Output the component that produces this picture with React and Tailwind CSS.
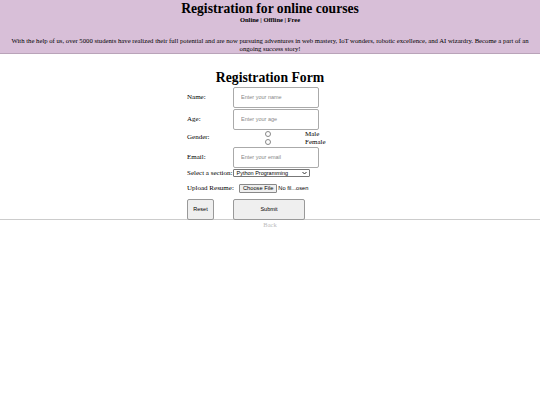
import React from "react";

const serif = { fontFamily: '"Liberation Serif", "Times New Roman", serif' };
const sans = { fontFamily: '"Liberation Sans", Arial, sans-serif' };

export default function App() {
  return (
    <div className="min-h-[405px] bg-white text-black" style={serif}>
      {/* Header */}
      <header className="bg-[#d8bfd8] border-b border-[#b9a3b9] text-center">
        <h1 className="text-[13.6px] font-bold leading-[15px] pt-[1px]">
          Registration for online courses
        </h1>
        <p className="text-[6.5px] font-bold leading-[8px] text-black">Online | Offline | Free</p>
        <p className="text-[6.7px] leading-[8px] mt-[13px] px-[6px]">
          With the help of us, over 5000 students have realized their full potential and are now
          pursuing adventures in web mastery, IoT wonders, robotic excellence, and AI wizardry.
          Become a part of an ongoing success story!
        </p>
      </header>

      {/* Form */}
      <main className="flex flex-col items-center">
        <h2 className="text-[13.7px] font-bold leading-[16px] mt-[16px]">Registration Form</h2>
        <form className="w-[166px] text-[7px] flex flex-col">
          <div className="flex items-center h-[22px]">
            <label className="w-[46px]">Name:</label>
            <input
              placeholder="Enter your name"
              className="w-[86px] h-[21px] border border-[#aaa] rounded-[2px] px-[7px] text-[5.5px] placeholder-[#888]"
              style={sans}
            />
          </div>
          <div className="flex items-center h-[22px]">
            <label className="w-[46px]">Age:</label>
            <input
              placeholder="Enter your age"
              className="w-[86px] h-[21px] border border-[#aaa] rounded-[2px] px-[7px] text-[5.5px] placeholder-[#888]"
              style={sans}
            />
          </div>
          <div className="flex items-center h-[15px]">
            <label className="w-[46px]">Gender:</label>
            <div className="flex flex-col">
              <div className="flex items-center h-[8px]">
                <span className="w-[6px] h-[6px] rounded-full border border-[#888] ml-[32px]" />
                <span className="ml-[34px] leading-[8px]">Male</span>
              </div>
              <div className="flex items-center h-[8px]">
                <span className="w-[6px] h-[6px] rounded-full border border-[#888] ml-[32px]" />
                <span className="ml-[34px] leading-[8px]">Female</span>
              </div>
            </div>
          </div>
          <div className="flex items-center h-[22px] mt-[1px]">
            <label className="w-[46px]">Email:</label>
            <input
              placeholder="Enter your email"
              className="w-[86px] h-[21px] border border-[#aaa] rounded-[2px] px-[7px] text-[5.5px] placeholder-[#888]"
              style={sans}
            />
          </div>
          <div className="flex items-center h-[10px]">
            <label className="whitespace-nowrap">Select a section:</label>
            <div
              className="ml-[1px] w-[77px] h-[8px] border border-[#777] rounded-[1px] flex items-center justify-between px-[2px] text-[5.5px]"
              style={sans}
            >
              <span>Python Programming</span>
              <svg width="5" height="4" viewBox="0 0 10 6">
                <path d="m1 1 4 4 4-4" stroke="#333" strokeWidth="2" fill="none" />
              </svg>
            </div>
          </div>
          <div className="flex items-center h-[18px] mt-[1px]">
            <label className="w-[52px] whitespace-nowrap">Upload Resume:</label>
            <div className="flex items-center text-[5.7px]" style={sans}>
              <span className="border border-[#888] bg-[#efefef] rounded-[1px] px-[3px] h-[9px] flex items-center">
                Choose File
              </span>
              <span className="ml-[1px]">No fil...osen</span>
            </div>
          </div>
          <div className="flex items-center mt-[2px] text-[5.5px]" style={sans}>
            <button
              type="button"
              className="w-[27px] h-[21px] border border-[#999] bg-[#efefef] rounded-[2px]"
            >
              Reset
            </button>
            <button
              type="button"
              className="w-[72px] h-[21px] ml-[19px] border border-[#999] bg-[#efefef] rounded-[2px]"
            >
              Submit
            </button>
          </div>
        </form>
      </main>
      <div className="border-t border-[#ccc] mt-[-1px]" />
      <p className="text-center text-[6.5px] text-[#bbb] leading-[8px] mt-[1px]">Back</p>
    </div>
  );
}
